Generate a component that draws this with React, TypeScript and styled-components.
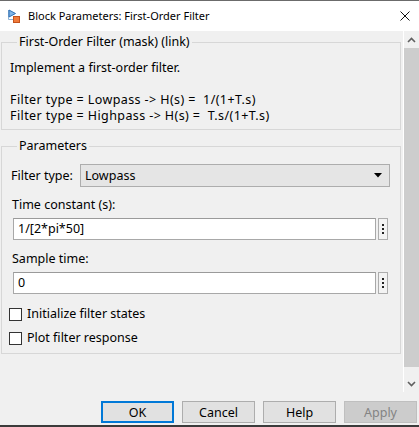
import React from 'react';
import styled, { createGlobalStyle } from 'styled-components';

const Global = createGlobalStyle`
  html, body { margin: 0; padding: 0; background: #f0f0f0; overflow: hidden; }
  body {
    font-family: "Noto Sans", "Liberation Sans", sans-serif;
    font-size: 12.5px;
    color: #000;
  }
  * { box-sizing: border-box; }
`;

const Window = styled.div`
  width: 419px;
  height: 427px;
  display: flex;
  flex-direction: column;
  background: #f0f0f0;
  border-top: 1px solid #6b6b6b;
`;

const TitleBar = styled.div`
  height: 30px;
  flex: none;
  background: #fff;
  display: flex;
  align-items: center;
  padding-left: 7px;
  padding-right: 9px;
  gap: 8px;
`;

const TitleText = styled.div`
  flex: 1;
  font-size: 11px;
  line-height: 16px;
  color: #000;
  white-space: nowrap;
`;

const Body = styled.div`
  height: 361px;
  flex: none;
  display: flex;
`;

const Content = styled.div`
  flex: 1;
  padding: 0 2px 0 1px;
  display: flex;
  flex-direction: column;
`;

const Group = styled.fieldset<{ $top: number; $pt: number; $pb: number }>`
  margin: ${p => p.$top}px 0 0 0;
  padding: ${p => p.$pt}px 10px ${p => p.$pb}px 8px;
  border: 1px solid #d7d7d7;
  min-width: 0;
`;

const Legend = styled.legend`
  padding: 0 2px;
  margin-left: 7px;
  line-height: 16px;
`;

const Line = styled.div<{ $spread?: boolean }>`
  line-height: 16px;
  min-height: 16px;
  white-space: pre;
  padding-left: 0;
  letter-spacing: ${p => (p.$spread ? '0.4px' : 'normal')};
`;

const Row = styled.div`
  display: flex;
  align-items: center;
`;

const RowLabel = styled.div`
  width: 70px;
  flex: none;
  line-height: 16px;
  padding-left: 1px;
`;

const Select = styled.div`
  flex: 1;
  height: 23px;
  background: #e5e5e5;
  border: 1px solid #adadad;
  display: flex;
  align-items: center;
  padding: 0 7px 0 4px;
`;

const SelectValue = styled.span`
  flex: 1;
  line-height: 16px;
`;

const FieldLabel = styled.div<{ $mt: number }>`
  margin-top: ${p => p.$mt}px;
  line-height: 16px;
  padding-left: 2px;
`;

const InputRow = styled.div`
  display: flex;
  gap: 2px;
  margin: 5px 2px 0 3px;
  height: 22px;
`;

const TextInput = styled.div`
  flex: 1;
  background: #fff;
  border: 1px solid #a8a8a8;
  border-top-color: #9a9a9a;
  display: flex;
  align-items: center;
  padding-left: 4px;
  line-height: 16px;
`;

const MoreButton = styled.div`
  width: 10px;
  flex: none;
  background: #f3f3f3;
  border: 1px solid #adadad;
  display: flex;
  flex-direction: column;
  align-items: center;
  justify-content: center;
  gap: 2px;
`;

const Dot = styled.span`
  width: 2px;
  height: 2px;
  background: #222;
`;

const CheckRow = styled.label<{ $mt: number }>`
  display: flex;
  align-items: center;
  gap: 5px;
  margin: ${p => p.$mt}px 0 0 -1px;
  line-height: 16px;
`;

const CheckBox = styled.span`
  width: 13px;
  height: 13px;
  flex: none;
  background: #fff;
  border: 1px solid #333;
`;

const ScrollBar = styled.div`
  width: 16px;
  flex: none;
  border-left: 1px solid #fff;
  display: flex;
  flex-direction: column;
  background: #f0f0f0;
`;

const ScrollArrow = styled.div`
  height: 17px;
  flex: none;
  display: flex;
  align-items: center;
  justify-content: center;
`;

const Thumb = styled.div`
  height: 319px;
  flex: none;
  background: #cdcdcd;
`;

const Track = styled.div`
  height: 8px;
  flex: none;
`;

const Footer = styled.div`
  height: 33px;
  flex: none;
  display: flex;
  justify-content: flex-end;
  align-items: flex-start;
  gap: 8px;
  padding: 9px 2px 0 0;
`;

const Button = styled.div<{ $variant?: 'default' | 'disabled' }>`
  width: 73px;
  height: 22px;
  display: flex;
  align-items: center;
  justify-content: center;
  background: ${p => (p.$variant === 'disabled' ? '#cccccc' : '#e1e1e1')};
  color: ${p => (p.$variant === 'disabled' ? '#838383' : '#000')};
  border: ${p =>
    p.$variant === 'default'
      ? '2px solid #0078d7'
      : p.$variant === 'disabled'
      ? '1px solid #bfbfbf'
      : '1px solid #adadad'};
`;

const BottomEdge = styled.div`
  height: 2px;
  flex: none;
  background: #3b3b3b;
`;

const BlockIcon = () => (
  <svg width="13" height="14" viewBox="0 0 13 14">
    <path d="M1.5 1 V10.5 H7" fill="none" stroke="#8fb3d6" strokeWidth="1" />
    <path d="M2 1 L8.5 4.5 L2 8 Z" fill="#7fb5e6" stroke="#2f6fb3" strokeWidth="1" />
    <rect x="6.5" y="7.5" width="6" height="6" fill="#f07a3a" stroke="#c4521c" strokeWidth="1" />
  </svg>
);

const CloseIcon = () => (
  <svg width="10" height="10" viewBox="0 0 10 10">
    <path d="M0.5 0.5 L9.5 9.5 M9.5 0.5 L0.5 9.5" stroke="#111" strokeWidth="1" />
  </svg>
);

const Chevron = ({ down }: { down?: boolean }) => (
  <svg width="9" height="6" viewBox="0 0 9 6">
    <path
      d={down ? 'M1 1 L4.5 4.5 L8 1' : 'M1 5 L4.5 1.5 L8 5'}
      fill="none"
      stroke="#606060"
      strokeWidth="1.6"
    />
  </svg>
);

const DropArrow = () => (
  <svg width="8" height="5" viewBox="0 0 8 5">
    <path d="M0 0 H8 L4 4.5 Z" fill="#000" />
  </svg>
);

export default function App() {
  return (
    <>
      <Global />
      <Window>
        <TitleBar>
          <BlockIcon />
          <TitleText>Block Parameters: First-Order Filter</TitleText>
          <CloseIcon />
        </TitleBar>
        <Body>
          <Content>
            <Group $top={3} $pt={10} $pb={5}>
              <Legend>First-Order Filter (mask) (link)</Legend>
              <Line>Implement a first-order filter.</Line>
              <Line> </Line>
              <Line $spread>{'Filter type = Lowpass -> H(s) =  1/(1+T.s)'}</Line>
              <Line $spread>{'Filter type = Highpass -> H(s) =  T.s/(1+T.s)'}</Line>
            </Group>
            <Group $top={8} $pt={10} $pb={7}>
              <Legend>Parameters</Legend>
              <Row>
                <RowLabel>Filter type:</RowLabel>
                <Select>
                  <SelectValue>Lowpass</SelectValue>
                  <DropArrow />
                </Select>
              </Row>
              <FieldLabel $mt={10}>Time constant (s):</FieldLabel>
              <InputRow>
                <TextInput>1/[2*pi*50]</TextInput>
                <MoreButton>
                  <Dot />
                  <Dot />
                  <Dot />
                </MoreButton>
              </InputRow>
              <FieldLabel $mt={11}>Sample time:</FieldLabel>
              <InputRow>
                <TextInput>0</TextInput>
                <MoreButton>
                  <Dot />
                  <Dot />
                  <Dot />
                </MoreButton>
              </InputRow>
              <CheckRow $mt={12}>
                <CheckBox />
                Initialize filter states
              </CheckRow>
              <CheckRow $mt={8}>
                <CheckBox />
                Plot filter response
              </CheckRow>
            </Group>
          </Content>
          <ScrollBar>
            <ScrollArrow>
              <Chevron />
            </ScrollArrow>
            <Thumb />
            <Track />
            <ScrollArrow>
              <Chevron down />
            </ScrollArrow>
          </ScrollBar>
        </Body>
        <Footer>
          <Button $variant="default">OK</Button>
          <Button>Cancel</Button>
          <Button>Help</Button>
          <Button $variant="disabled">Apply</Button>
        </Footer>
        <BottomEdge />
      </Window>
    </>
  );
}
